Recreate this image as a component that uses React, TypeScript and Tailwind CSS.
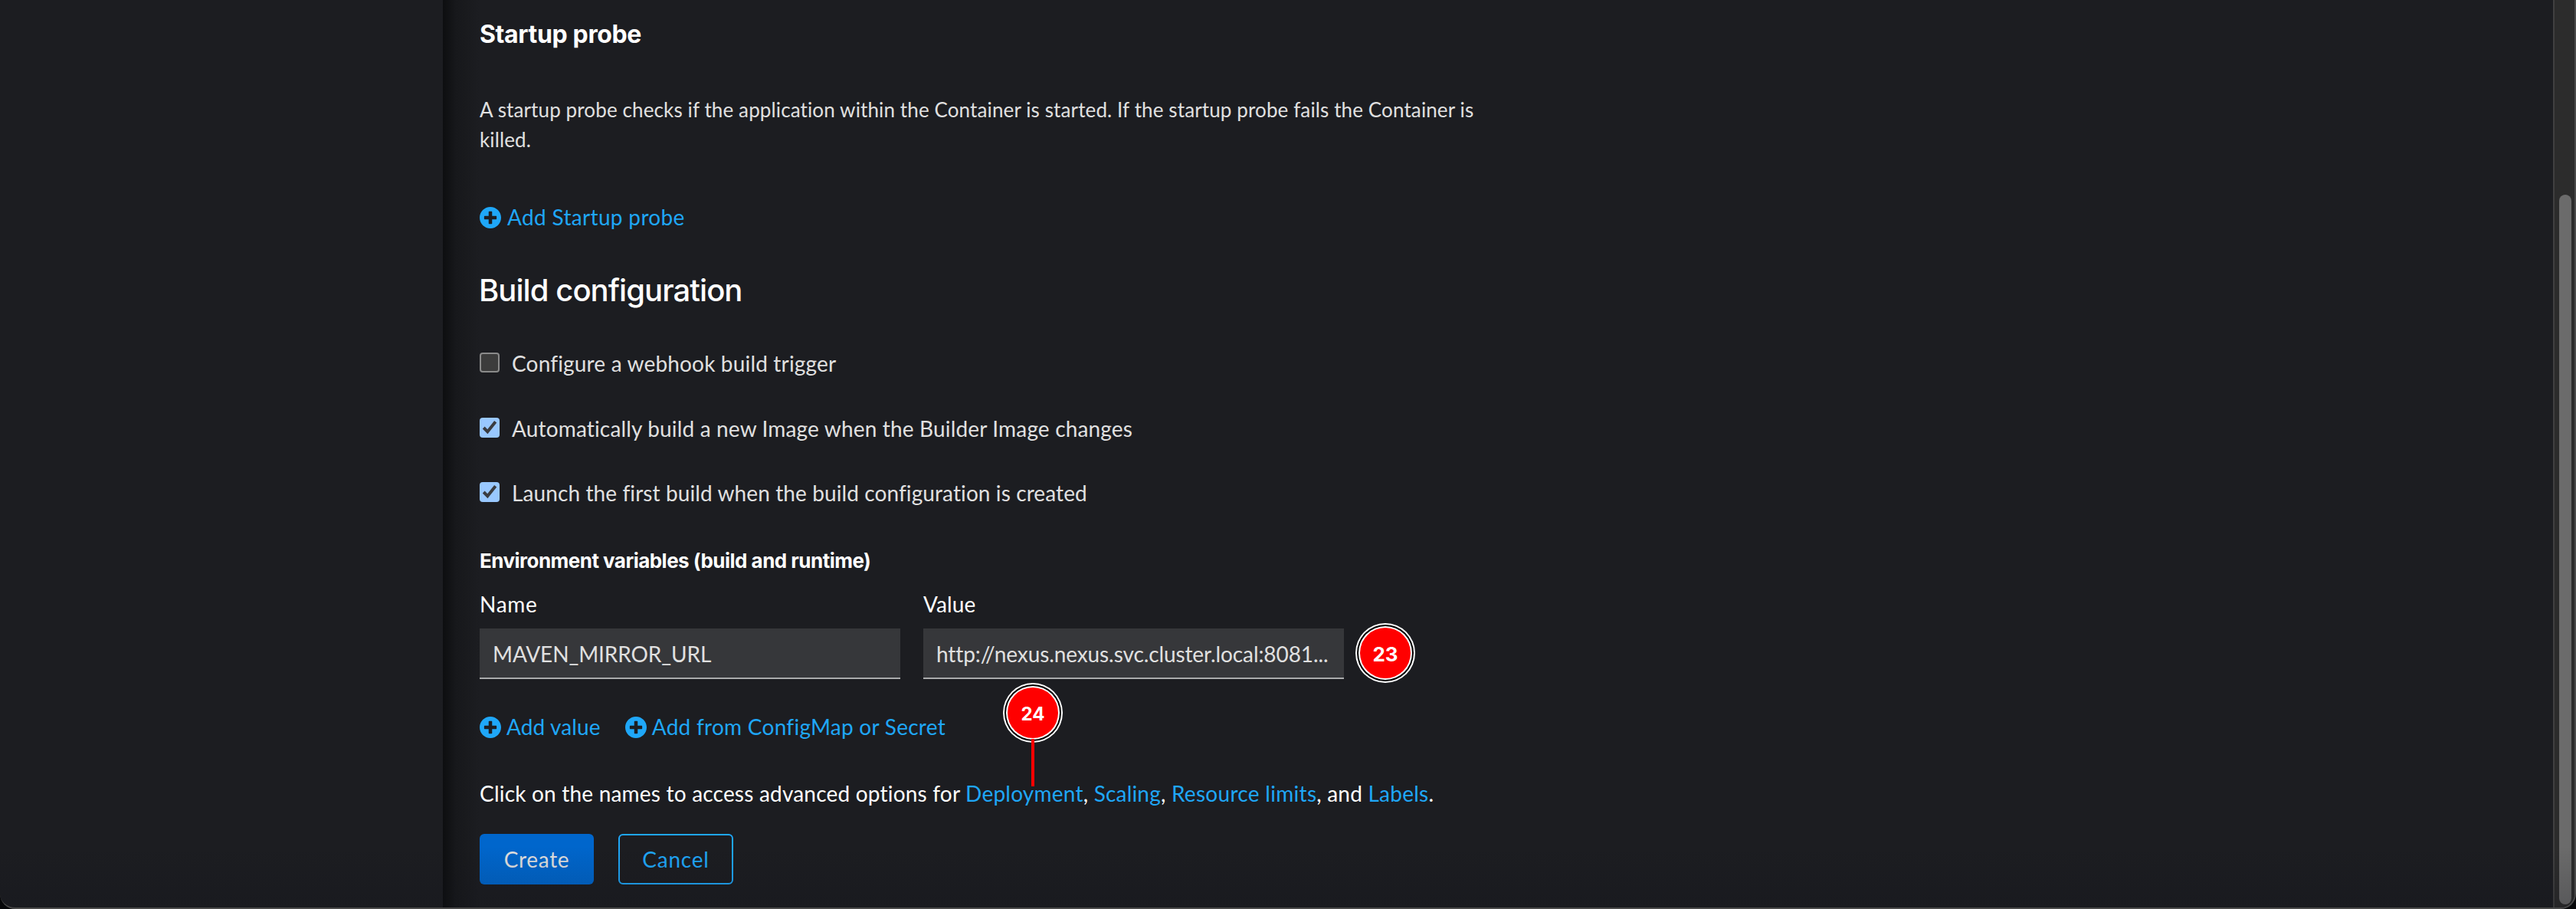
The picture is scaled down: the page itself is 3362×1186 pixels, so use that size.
import type { ReactNode } from 'react';

function PlusCircle() {
  return (
    <svg viewBox="8 8 496 496" className="size-7 shrink-0 fill-current" aria-hidden="true">
      <path d="M256 8C119 8 8 119 8 256s111 248 248 248 248-111 248-248S393 8 256 8zm144 276c0 6.600-5.400 12-12 12h-92v92c0 6.600-5.400 12-12 12h-56c-6.600 0-12-5.400-12-12v-92h-92c-6.600 0-12-5.400-12-12v-56c0-6.600 5.400-12 12-12h92v-92c0-6.600 5.400-12 12-12h56c6.600 0 12 5.400 12 12v92h92c6.600 0 12 5.400 12 12v56z" />
    </svg>
  );
}

function AddLink({ className, children }: { className: string; children: ReactNode }) {
  return (
    <button type="button" className="flex h-[42px] items-center text-[#1fa7f8]">
      <PlusCircle />
      <span className={`-mt-0.5 ${className}`}>{children}</span>
    </button>
  );
}

function CheckRow({ checked, className, children }: { checked?: boolean; className: string; children: ReactNode }) {
  return (
    <label className="flex h-[42px] items-center gap-4 text-[#e0e0e0]">
      <span
        className={
          checked
            ? '-mt-0.5 flex size-[26px] items-center justify-center rounded bg-[#99c8ff]'
            : '-mt-0.5 flex size-[26px] rounded border-2 border-[#8a8a8a] bg-[#3c3c3c]'
        }
      >
        {checked && (
          <svg viewBox="0 0 26 26" className="size-[26px] fill-none stroke-[#3a3c40] stroke-[4]" aria-hidden="true">
            <path d="M5.200 13 10.300 18.200 20.700 5.300" />
          </svg>
        )}
      </span>
      <span className={className}>{children}</span>
    </label>
  );
}

function Field({ className, children }: { className: string; children: ReactNode }) {
  return (
    <div className="flex h-[66px] w-[549px] items-center border-b-2 border-[#aaabac] bg-[#36373a] px-[17px] pt-0.5 text-[#e0e0e0]">
      <span className={className}>{children}</span>
    </div>
  );
}

function Marker({ className, children }: { className: string; children: ReactNode }) {
  return (
    <div className="size-[78px] rounded-full bg-white p-0.5">
      <div className="size-full rounded-full bg-black p-0.5">
        <div className="size-full rounded-full bg-white p-0.5">
          <div
            className={`flex size-full items-center justify-center rounded-full bg-[#ff0000] font-['Inter',sans-serif] font-bold text-white ${className}`}
          >
            {children}
          </div>
        </div>
      </div>
    </div>
  );
}

function TextLink({ className, children }: { className: string; children: ReactNode }) {
  return <a className={`text-[#1fa7f8] ${className}`}>{children}</a>;
}

export default function App() {
  return (
    <div className="h-[1186px] w-[3362px] overflow-hidden bg-[#07080a]">
      <div className="relative flex h-full w-full overflow-hidden rounded-b-[20px] border-r-2 border-b-2 border-[#4a4a4a] bg-[#1c1d21] font-['Lato',sans-serif] text-[28px] leading-[42px] whitespace-nowrap">
        <aside className="w-[578px] shrink-0" />

        <div className="w-12 shrink-0 bg-linear-to-r from-[#0d0e10] via-[#17181b] via-35% to-[#1c1d21]" />

        <main className="flex grow flex-col items-start pt-[21px] text-white">
          <h3 className="h-12 font-['Inter',sans-serif] text-[32px] leading-[48px] font-bold tracking-[-0.36px]">Startup probe</h3>
          <p className="mt-[55px] w-[1310px] text-[26px] leading-[39px] tracking-[0.12px] whitespace-normal text-[#e0e0e0]">
            A startup probe checks if the application within the Container is started. If the startup probe fails the Container is
            killed.
          </p>
          <div className="mt-[61px]">
            <AddLink className="ml-2 tracking-[0.33px]">Add Startup probe</AddLink>
          </div>

          <h2 className="mt-12 -ml-px h-[52px] font-['Inter',sans-serif] text-[40px] leading-[52px] font-medium tracking-[-0.94px]">
            Build configuration
          </h2>
          <div className="mt-12 flex flex-col gap-[42.5px]">
            <CheckRow className="tracking-[0.168px]">Configure a webhook build trigger</CheckRow>
            <CheckRow checked className="tracking-[0.16px]">Automatically build a new Image when the Builder Image changes</CheckRow>
            <CheckRow checked className="tracking-[0.1px]">Launch the first build when the build configuration is created</CheckRow>
          </div>

          <h4 className="mt-12 h-10 font-['Inter',sans-serif] text-[26px] leading-10 font-bold tracking-[-0.526px]">
            Environment variables (build and runtime)
          </h4>
          <div className="mt-[15px] flex gap-[30px]">
            <div className="flex w-[549px] flex-col gap-[11px]">
              <span className="tracking-[0.7px]">Name</span>
              <Field className="tracking-[-0.098px]">MAVEN_MIRROR_URL</Field>
            </div>
            <div className="relative flex w-[549px] flex-col gap-[11px]">
              <span className="tracking-[0.117px]">Value</span>
              <Field className="tracking-[-0.098px]">http://nexus.nexus.svc.cluster.local:8081...</Field>
              <div className="absolute top-[46px] left-[564px]">
                <Marker className="pt-[3px] text-[26px]">23</Marker>
              </div>
              <div className="absolute top-[124px] left-[104px] z-10 flex flex-col items-center">
                <Marker className="pt-[3px] text-[24px]">24</Marker>
                <div className="-mt-[5px] h-[62px] w-1 bg-[#ff0000]" />
              </div>
            </div>
          </div>

          <div className="mt-[42px] flex gap-8">
            <AddLink className="ml-[7px] tracking-[0.131px]">Add value</AddLink>
            <AddLink className="ml-[7px] tracking-[0.265px]">Add from ConfigMap or Secret</AddLink>
          </div>

          <p className="mt-11 tracking-[0.2px]">
            Click on the names to access advanced options for <TextLink className="tracking-[0.23px]">Deployment</TextLink>,{' '}
            <TextLink className="tracking-[0.2px]">Scaling</TextLink>,{' '}
            <TextLink className="tracking-[0.298px]">Resource limits</TextLink>, and{' '}
            <TextLink className="tracking-[0.246px]">Labels</TextLink>.
          </p>

          <div className="mt-8 flex gap-8">
            <button type="button" className="h-[66px] w-[149px] rounded-md bg-[#0066cc] tracking-[0.655px] text-[#e0e0e0]">
              Create
            </button>
            <button type="button" className="h-[66px] w-[150px] rounded-md border-2 border-[#1fa7f8] tracking-[0.771px] text-[#1fa7f8]">
              Cancel
            </button>
          </div>
        </main>

        <div className="flex w-7 shrink-0 flex-col items-center border-l-2 border-[#404040] bg-[#2c2c2c] pt-[254px] pr-1 pl-[6px]">
          <div className="h-[926px] w-4 rounded-full bg-[#6b6b6b]" />
        </div>

        <div className="pointer-events-none absolute inset-x-0 bottom-0 h-20 bg-linear-to-b from-transparent to-[#0f1018]/20" />
      </div>
    </div>
  );
}
